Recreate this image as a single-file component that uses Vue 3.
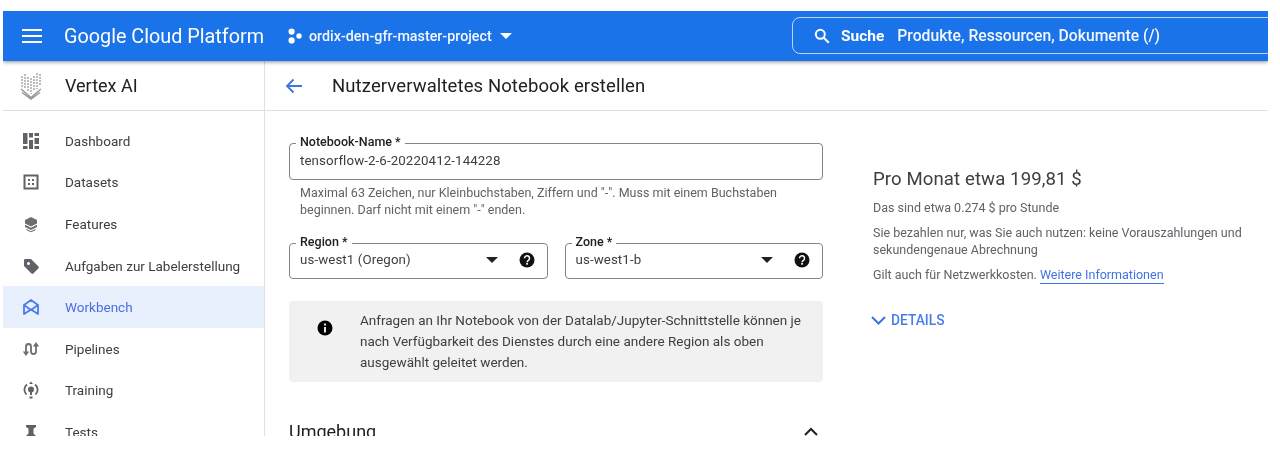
<script setup>
const navItems = [
  { label: 'Dashboard', icon: 'dashboard' },
  { label: 'Datasets', icon: 'datasets' },
  { label: 'Features', icon: 'features' },
  { label: 'Aufgaben zur Labelerstellung', icon: 'label' },
  { label: 'Workbench', icon: 'workbench', active: true },
  { label: 'Pipelines', icon: 'pipelines' },
  { label: 'Training', icon: 'training' },
  { label: 'Tests', icon: 'tests' }
]
const selects = [
  { label: 'Region *', value: 'us-west1 (Oregon)' },
  { label: 'Zone *', value: 'us-west1-b' }
]
</script>

<template>
  <div class="frame">
    <header class="topbar">
      <svg class="menu" width="20" height="14" viewBox="0 0 20 14"><path d="M0 0h20v2H0zM0 6h20v2H0zM0 12h20v2H0z" fill="#fff"/></svg>
      <span class="brand">Google Cloud Platform</span>
      <svg class="project-icon" width="14" height="16" viewBox="0 0 14 16" fill="#fff"><circle cx="3.6" cy="3.6" r="3.1"/><circle cx="3.6" cy="12.4" r="3.1"/><circle cx="11" cy="8" r="2.7"/></svg>
      <span class="project">ordix-den-gfr-master-project</span>
      <span class="project-caret"></span>
      <div class="search">
        <svg width="16" height="16" viewBox="0 0 16 16" fill="none" stroke="#fff" stroke-width="2"><circle cx="6.3" cy="6.3" r="4.5"/><path d="M9.8 9.8l5 5"/></svg>
        <b>Suche</b>
        <span>Produkte, Ressourcen, Dokumente (/)</span>
      </div>
    </header>

    <div class="body">
      <aside class="sidebar">
        <div class="product">
          <svg class="product-icon" width="24" height="28" viewBox="0 0 24 28" fill="none" stroke="#9a9a9a">
            <path d="M2 17l10 8.500 10-8.500M3 20.500l9 6.500 9-6.500" stroke-width="1.500"/>
            <path d="M3 4v11M6 2v15M9 5v15M12 6v16M15 4v15M18 1v16M21 2v12" stroke-width="1.300" stroke-dasharray="2 1"/>
          </svg>
          <span>Vertex AI</span>
        </div>
        <nav class="nav">
          <div v-for="item in navItems" :key="item.label" class="nav-item" :class="{ active: item.active }">
            <svg class="nav-icon" width="18" height="18" viewBox="0 0 18 18">
              <g v-if="item.icon === 'dashboard'" fill="#5f6368">
                <path d="M1 1h4.500v11H1zM1 14h4.500v3H1zM7 1h4v4.500H7zM7 8h4v9H7zM12.500 1H17v3h-4.500zM12.500 6H17v6h-4.500zM12.500 14H17v3h-4.500z"/>
              </g>
              <g v-else-if="item.icon === 'datasets'">
                <path d="M2.500 2.500h13v13h-13z" fill="none" stroke="#5f6368" stroke-width="2"/>
                <path d="M6 6h2v2H6zM10 6h2v2h-2zM6 10h2v2H6zM10 10h2v2h-2z" fill="#5f6368"/>
              </g>
              <g v-else-if="item.icon === 'features'" fill="#6b6f73">
                <path d="M9 2l6 3v3.500l-6 3-6-3V5z"/>
                <path d="M3 9.800l6 3 6-3v2.200l-6 3-6-3z"/>
                <path d="M4 13.700l5 2.500 5-2.500-1 1.800-4 1.800-4-1.800z"/>
              </g>
              <path v-else-if="item.icon === 'label'" fill="#5f6368" fill-rule="evenodd" d="M2 3.200A1.200 1.200 0 0 1 3.200 2H9l7.500 7.500a1.300 1.300 0 0 1 0 1.800l-5.200 5.200a1.300 1.300 0 0 1-1.800 0L2 9zM5 6.500a1.500 1.500 0 1 0 0-.01z"/>
              <g v-else-if="item.icon === 'workbench'" fill="none" stroke="#4a7be8" stroke-width="1.800" stroke-linejoin="round">
                <path d="M2 16V7l7-5 7 5v9l-7-4.500z"/>
                <path d="M2 7l7 5 7-5"/>
              </g>
              <g v-else-if="item.icon === 'pipelines'">
                <path d="M4 13V6.500a2.500 2.500 0 0 1 5 0v5a2.500 2.500 0 0 0 5 0V5" fill="none" stroke="#6b6f73" stroke-width="1.800"/>
                <path d="M.8 11.500L4 16l3.200-4.500zM10.800 6.500L14 2l3.200 4.500z" fill="#6b6f73"/>
              </g>
              <g v-else-if="item.icon === 'training'">
                <circle cx="9" cy="8.500" r="3" fill="#5f6368"/>
                <path d="M9 11v3" stroke="#5f6368" stroke-width="2"/>
                <path d="M4.500 13.500A6.500 6.500 0 0 1 5 3.500M13.500 13.500A6.500 6.500 0 0 0 13 3.500" fill="none" stroke="#5f6368" stroke-width="1.800"/>
                <path d="M9 .5l2 2.500H7z M7.500 15.500h3v2h-3z" fill="#5f6368"/>
              </g>
              <path v-else fill="#5f6368" d="M4 2h10v2l-2.500 1.500v5L14 13v2H4v-2l2.500-2.500v-5L4 4z"/>
            </svg>
            <span>{{ item.label }}</span>
          </div>
        </nav>
      </aside>

      <main class="main">
        <div class="page-head">
          <svg width="18" height="16" viewBox="0 0 18 16" fill="none" stroke="#3f74e0" stroke-width="1.800"><path d="M17 8H2M8.500 1.500L2 8l6.500 6.500"/></svg>
          <h1>Nutzerverwaltetes Notebook erstellen</h1>
        </div>

        <div class="columns">
          <section class="form">
            <div class="field name-field">
              <label>Notebook-Name *</label>
              <span class="value">tensorflow-2-6-20220412-144228</span>
            </div>
            <p class="hint">Maximal 63 Zeichen, nur Kleinbuchstaben, Ziffern und "-". Muss mit einem Buchstaben beginnen. Darf nicht mit einem "-" enden.</p>

            <div class="select-row">
              <div v-for="s in selects" :key="s.label" class="field select-field">
                <label>{{ s.label }}</label>
                <span class="value">{{ s.value }}</span>
                <span class="caret"></span>
                <svg class="help" width="16" height="16" viewBox="0 0 16 16">
                  <circle cx="8" cy="8" r="7.500" fill="#111"/>
                  <path d="M5.500 6.200a2.500 2.500 0 1 1 3.900 2.100c-.9.600-1.300 1-1.300 1.900" fill="none" stroke="#fff" stroke-width="1.500"/>
                  <rect x="7.200" y="11" width="1.700" height="1.700" fill="#fff"/>
                </svg>
              </div>
            </div>

            <div class="notice">
              <svg width="16" height="16" viewBox="0 0 16 16">
                <circle cx="8" cy="8" r="7.500" fill="#000"/>
                <path d="M7.100 3.600h1.800v1.800H7.100zM7.100 7h1.800v5.400H7.100z" fill="#fff"/>
              </svg>
              <p>Anfragen an Ihr Notebook von der Datalab/Jupyter-Schnittstelle können je nach Verfügbarkeit des Dienstes durch eine andere Region als oben ausgewählt geleitet werden.</p>
            </div>

            <div class="section-head">
              <h2>Umgebung</h2>
              <svg width="14" height="9" viewBox="0 0 14 9" fill="none" stroke="#202124" stroke-width="2"><path d="M1 8l6-6 6 6"/></svg>
            </div>
          </section>

          <aside class="cost">
            <h3>Pro Monat etwa 199,81 $</h3>
            <p class="hourly">Das sind etwa 0.274 $ pro Stunde</p>
            <p class="usage">Sie bezahlen nur, was Sie auch nutzen: keine Vorauszahlungen und sekundengenaue Abrechnung</p>
            <p class="network">Gilt auch für Netzwerkkosten. <a>Weitere Informationen</a></p>
            <div class="details">
              <svg width="15" height="9" viewBox="0 0 15 9" fill="none" stroke="#3f74e0" stroke-width="2"><path d="M1 1l6.500 6.500L14 1"/></svg>
              <span>DETAILS</span>
            </div>
          </aside>
        </div>
      </main>
    </div>
  </div>
</template>

<style scoped>
.frame {
  margin: 11px 0 0 3px;
  width: 1265px;
  height: 425px;
  overflow: hidden;
  font-family: Roboto, "Liberation Sans", sans-serif;
  color: #202124;
  background: #fff;
  display: flex;
  flex-direction: column;
  filter: blur(0.45px);
}
.topbar {
  flex: none;
  height: 50px;
  background: #1a73e8;
  color: #fff;
  display: flex;
  align-items: center;
  box-shadow: 0 1px 4px rgba(0, 0, 0, 0.45);
  position: relative;
  z-index: 1;
}
.menu { margin-left: 19px; }
.brand { margin-left: 22px; font-size: 19.800px; width: 224px; white-space: nowrap; }
.project { margin-left: 7px; font-size: 14.300px; font-weight: 500; white-space: nowrap; opacity: .95; }
.project-caret {
  margin-left: 8px;
  border-left: 6px solid transparent;
  border-right: 6px solid transparent;
  border-top: 6px solid #fff;
}
.search {
  position: absolute;
  left: 789px;
  top: 6px;
  width: 500px;
  height: 37px;
  box-sizing: border-box;
  border: 1px solid rgba(255, 255, 255, 0.7);
  border-radius: 8px;
  display: flex;
  align-items: center;
  padding-left: 21px;
  font-size: 15.700px;
}
.search b { margin-left: 11px; font-weight: 700; font-size: 15.500px; }
.search span { margin-left: 13px; font-weight: 500; opacity: .95; }

.body { flex: 1; display: flex; min-height: 0; }
.sidebar {
  flex: none;
  width: 261px;
  border-right: 1px solid #e0e0e0;
  overflow: hidden;
}
.product {
  height: 50px;
  box-sizing: border-box;
  border-bottom: 1px solid #e0e0e0;
  display: flex;
  align-items: center;
  font-size: 18px;
  padding-left: 16px;
}
.product-icon { margin-right: 22px; }
.nav { padding-top: 9px; }
.nav-item {
  height: 41.600px;
  display: flex;
  align-items: center;
  padding-left: 19px;
  font-size: 13.500px;
  color: #3c4043;
  white-space: nowrap;
}
.nav-icon { margin-right: 25px; flex: none; }
.nav-item.active { background: #e8f0fe; color: #4a6fe0; }

.main { flex: 1; min-width: 0; display: flex; flex-direction: column; }
.page-head {
  flex: none;
  height: 50px;
  box-sizing: border-box;
  border-bottom: 1px solid #e0e0e0;
  display: flex;
  align-items: center;
  padding-left: 20px;
}
h1 { margin: 0 0 0 29px; font-size: 18.500px; font-weight: 400; letter-spacing: 0.1px; }
.columns { display: flex; padding: 32px 0 0 24px; }
.form { flex: none; width: 534px; }
.field {
  position: relative;
  box-sizing: border-box;
  border: 1px solid #80868b;
  border-radius: 4px;
  display: flex;
  align-items: center;
  padding-left: 10px;
}
.field label {
  position: absolute;
  left: 6px;
  top: -9px;
  padding: 0 4px;
  background: #fff;
  font-size: 12.500px;
  line-height: 14px;
  font-weight: 500;
  color: #202124;
}
.value { font-size: 13.300px; color: #3c4043; margin-top: -3px; letter-spacing: 0.1px; }
.name-field { height: 37px; }
.hint { margin: 4px 10px 0 11px; font-size: 12.500px; line-height: 17px; color: #5f6368; width: 510px; }
.select-row { display: flex; gap: 17px; margin-top: 25px; }
.select-field { flex: 1; height: 36px; }
.caret {
  margin-left: auto;
  margin-top: -2px;
  border-left: 6px solid transparent;
  border-right: 6px solid transparent;
  border-top: 6px solid #202124;
}
.help { margin: -2px 12px 0 21px; }
.notice {
  margin-top: 22px;
  height: 81px;
  box-sizing: border-box;
  background: #f1f1f1;
  border-radius: 4px;
  display: flex;
  align-items: flex-start;
  padding: 9px 20px 0 28px;
}
.notice svg { flex: none; margin-top: 10px; }
.notice p { margin: 0 0 0 27px; font-size: 13.500px; line-height: 21px; color: #3c4043; }
.section-head {
  margin-top: 39px;
  display: flex;
  justify-content: space-between;
  align-items: center;
  padding-right: 5px;
}
h2 { margin: 0; font-size: 18px; font-weight: 400; }

.cost { margin: 25px 0 0 50px; width: 385px; font-size: 12.500px; color: #5f6368; }
h3 { margin: 0; font-size: 18.600px; font-weight: 400; color: #3c4043; letter-spacing: 0.1px; }
.cost p { margin: 0; line-height: 17px; }
.hourly { padding-top: 9px; }
.usage { padding-top: 8px; }
.network { padding-top: 8px; }
.network a { color: #3f74e0; border-bottom: 1px solid #3f74e0; padding-bottom: 1px; }
.details {
  margin-top: 29px;
  margin-left: -2px;
  display: flex;
  align-items: center;
  font-size: 13.800px;
  font-weight: 500;
  color: #4a7be8;
}
.details span { margin-left: 5px; }
</style>

<style>
html, body { background: #fff; margin: 0; overflow: hidden; }
</style>
